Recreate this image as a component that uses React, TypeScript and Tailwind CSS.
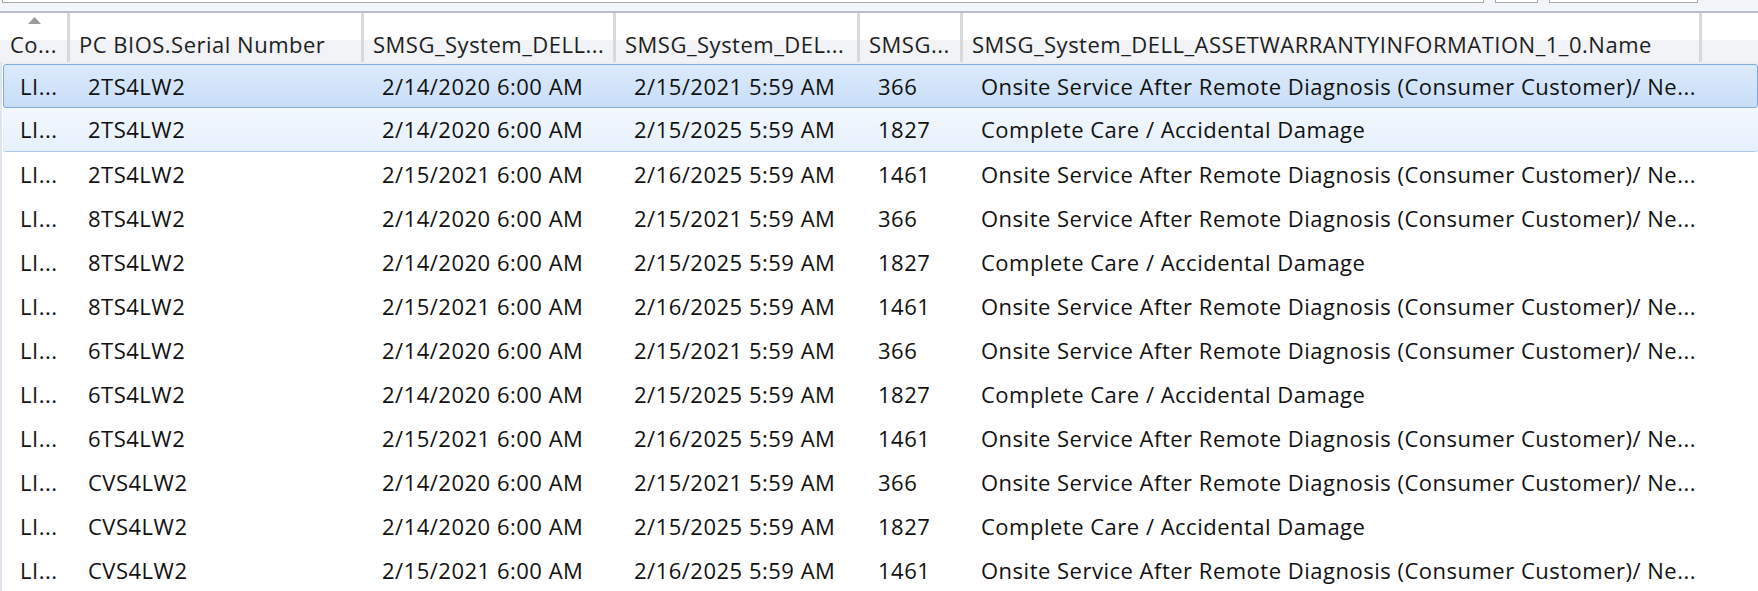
import React from "react";

type Row = { c: string; sn: string; start: string; end: string; days: string; name: string };

const ONSITE = "Onsite Service After Remote Diagnosis (Consumer Customer)/ Ne...";
const CARE = "Complete Care / Accidental Damage";

const serials = ["2TS4LW2", "8TS4LW2", "6TS4LW2", "CVS4LW2"];
const rows: Row[] = serials.flatMap((sn) => [
  { c: "LI...", sn, start: "2/14/2020 6:00 AM", end: "2/15/2021 5:59 AM", days: "366", name: ONSITE },
  { c: "LI...", sn, start: "2/14/2020 6:00 AM", end: "2/15/2025 5:59 AM", days: "1827", name: CARE },
  { c: "LI...", sn, start: "2/15/2021 6:00 AM", end: "2/16/2025 5:59 AM", days: "1461", name: ONSITE },
]);

function Sep() {
  return <div className="w-[3px] shrink-0 self-stretch bg-[#d9d9d9]" />;
}

function HeaderCell({ w, text }: { w: string; text: string }) {
  return (
    <div className={`${w} shrink-0 relative overflow-hidden whitespace-nowrap pl-[9px]`}>
      <div className="pt-[17px] leading-[28px]">{text}</div>
    </div>
  );
}

function DataRow({ r, i }: { r: Row; i: number }) {
  let cls = "h-[44px] flex items-center whitespace-nowrap text-[#111111] ";
  if (i === 0) {
    cls += "ml-[1px] border border-[#7fa8db] rounded-[3px] bg-gradient-to-b from-[#dcebfc] to-[#c8ddf8]";
  } else if (i === 1) {
    cls += "ml-[1px] border-b border-[#a9c8ec] rounded-b-[3px] bg-gradient-to-b from-[#f3f8fe] to-[#e6f0fc] pl-[1px]";
  } else {
    cls += "pl-[2px]";
  }
  return (
    <div className={cls}>
      <div className="w-[69px] shrink-0 pl-[16px]">{r.c}</div>
      <div className="w-[294px] shrink-0 pl-[15px]">{r.sn}</div>
      <div className="w-[252px] shrink-0 pl-[15px]">{r.start}</div>
      <div className="w-[244px] shrink-0 pl-[15px]">{r.end}</div>
      <div className="w-[103px] shrink-0 pl-[15px]">{r.days}</div>
      <div className="flex-1 pl-[15px]">{r.name}</div>
    </div>
  );
}

export default function App() {
  return (
    <div
      className="w-[1758px] h-[591px] overflow-hidden bg-white flex flex-col text-[22px] tracking-[0.5px]"
      style={{ fontFamily: '"Open Sans", "Noto Sans", sans-serif' }}
    >
      <div className="h-[13px] shrink-0 bg-[#f2f5fa] border-b-2 border-[#b9bec7] flex items-start">
        <div className="ml-[2px] w-[1482px] h-[3px] border-x border-b border-[#a9a9a9] bg-white" />
        <div className="ml-[11px] w-[43px] h-[3px] border-x border-b border-[#a9a9a9] bg-white" />
        <div className="ml-[11px] w-[149px] h-[3px] border-x border-b border-[#a9a9a9] bg-white" />
      </div>
      <div className="flex-1 flex flex-col border-l-2 border-[#dfe5ec]">
        <div className="h-[49px] shrink-0 flex text-[#1e1e1e] bg-[linear-gradient(to_bottom,#ffffff_0%,#ffffff_55%,#f1f3f6_55%,#f1f3f6_100%)] -ml-[2px]">
          <div className="w-[67px] shrink-0 relative overflow-hidden whitespace-nowrap pl-[10px]">
            <svg className="absolute left-[28px] top-[4px]" width="13" height="7" viewBox="0 0 13 7">
              <polygon points="6.5,0 13,7 0,7" fill="#9b9b9b" />
            </svg>
            <div className="pt-[17px] leading-[28px]">Co...</div>
          </div>
          <Sep />
          <HeaderCell w="w-[291px]" text="PC BIOS.Serial Number" />
          <Sep />
          <HeaderCell w="w-[249px]" text="SMSG_System_DELL..." />
          <Sep />
          <HeaderCell w="w-[241px]" text="SMSG_System_DEL..." />
          <Sep />
          <HeaderCell w="w-[100px]" text="SMSG..." />
          <Sep />
          <HeaderCell w="w-[736px]" text="SMSG_System_DELL_ASSETWARRANTYINFORMATION_1_0.Name" />
          <Sep />
          <div className="flex-1" />
        </div>
        <div className="h-[2px] shrink-0 bg-[#eceef1]" />
        <div className="flex flex-col">
          {rows.map((r, i) => (
            <DataRow key={i} r={r} i={i} />
          ))}
        </div>
      </div>
    </div>
  );
}
